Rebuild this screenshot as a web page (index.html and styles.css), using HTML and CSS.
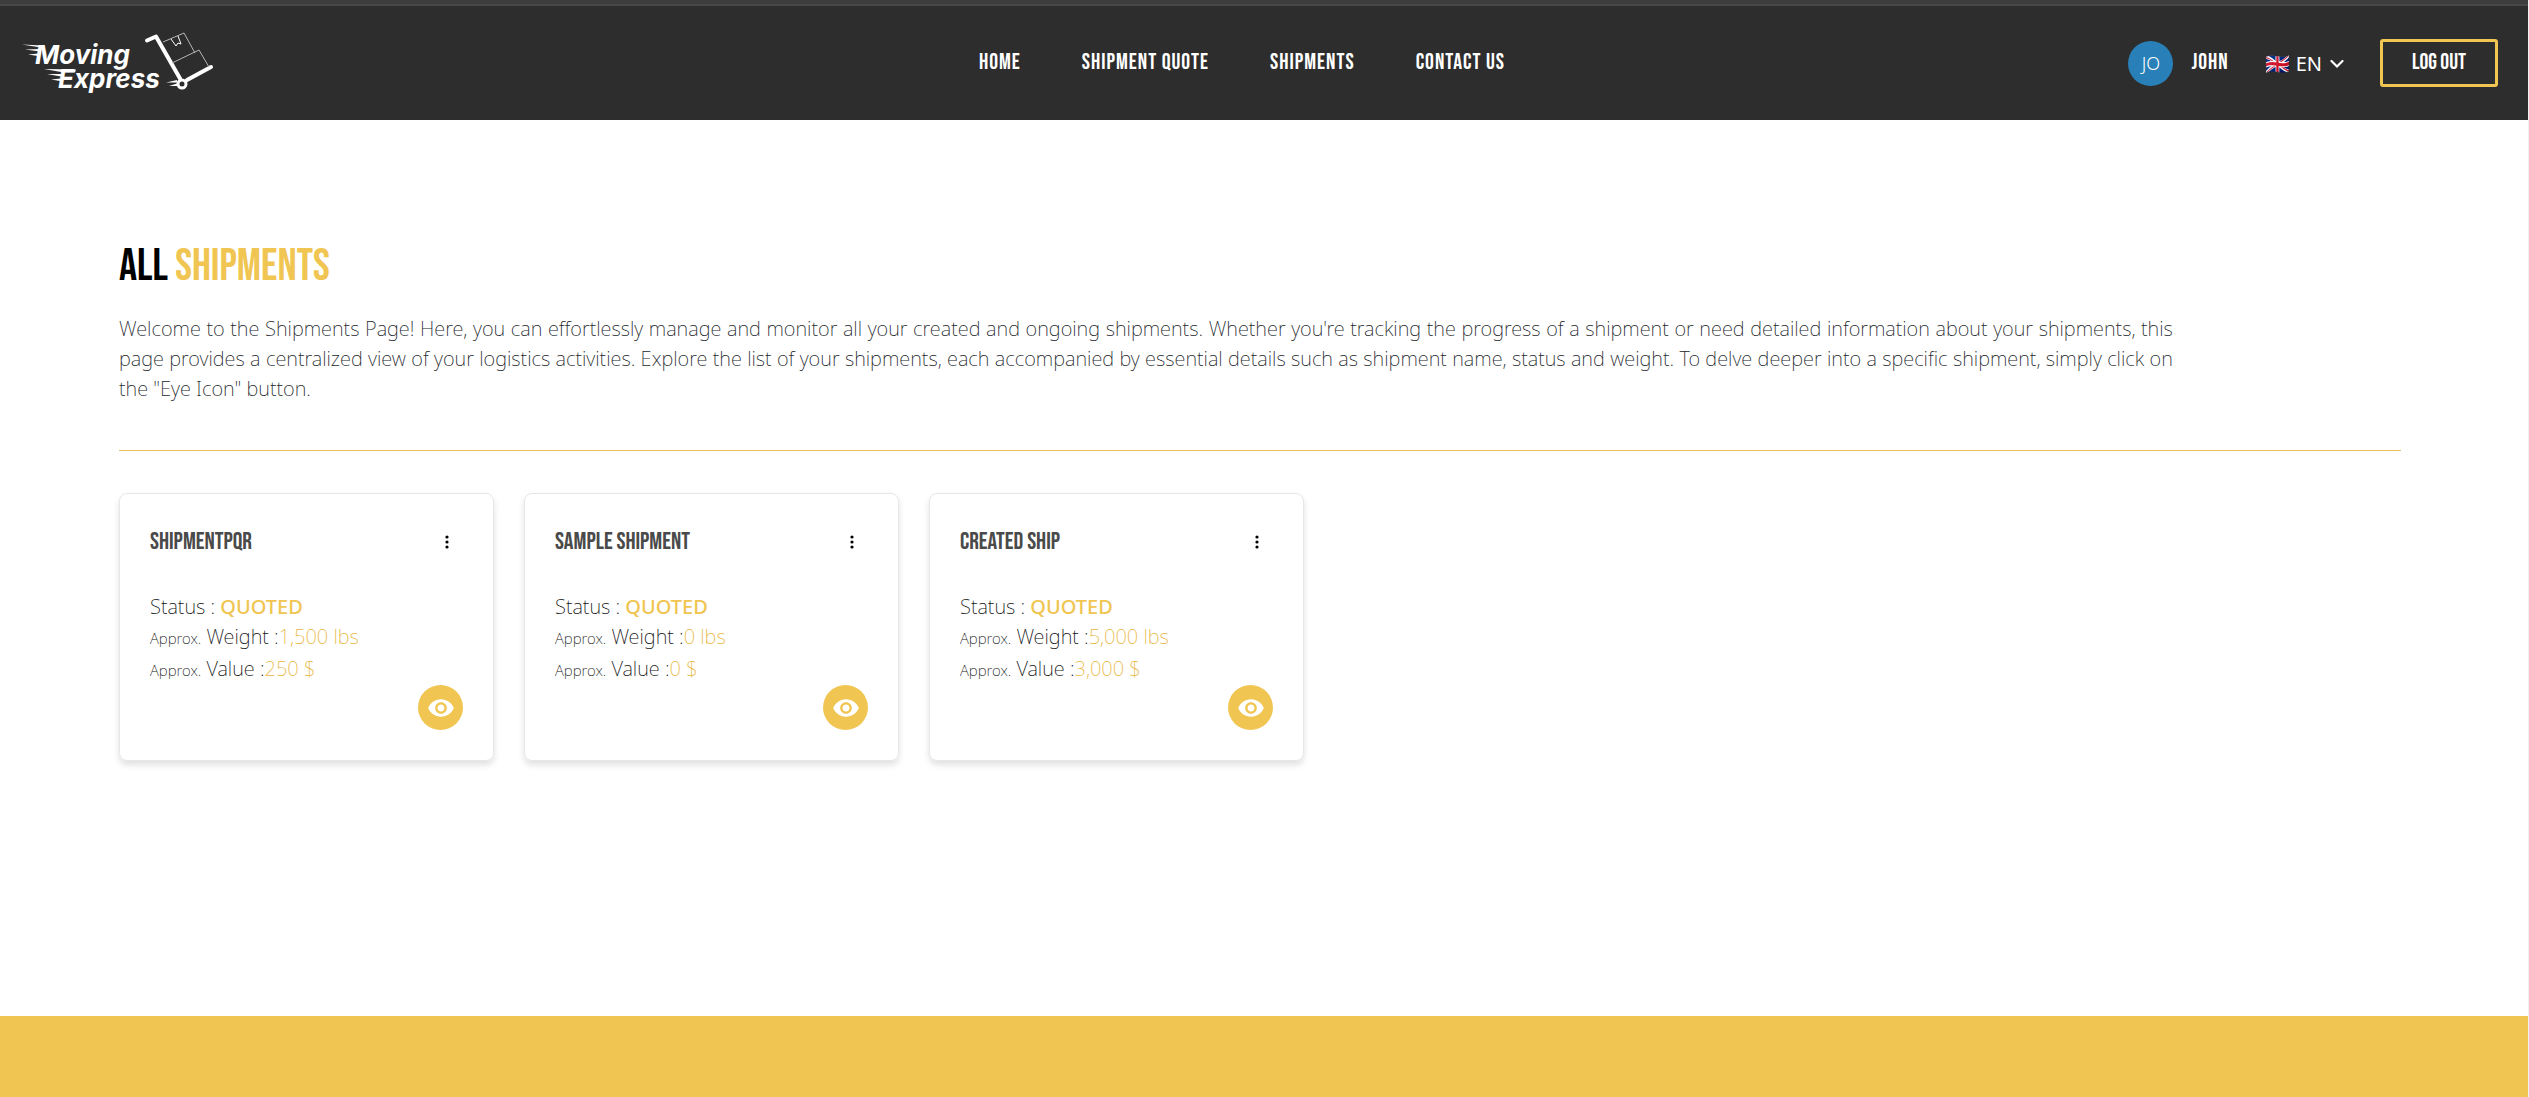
FILE: index.html
```html
<!DOCTYPE html>
<html lang="en">
<head>
<meta charset="utf-8">
<meta name="viewport" content="width=device-width, initial-scale=1">
<title>Moving Express – All Shipments</title>
<link rel="stylesheet" href="styles.css">
</head>
<body>
<svg class="sprite" aria-hidden="true">
  <symbol id="dots" viewBox="0 0 4 14"><circle cx="2" cy="2" r="1.6"/><circle cx="2" cy="7" r="1.6"/><circle cx="2" cy="12" r="1.6"/></symbol>
  <symbol id="eye" viewBox="0 0 24 24"><path d="M12 4.5C7 4.5 2.73 7.61 1 12c1.73 4.39 6 7.5 11 7.5s9.27-3.11 11-7.5c-1.73-4.39-6-7.5-11-7.5zM12 17c-2.76 0-5-2.24-5-5s2.24-5 5-5 5 2.24 5 5-2.24 5-5 5zm0-8c-1.66 0-3 1.34-3 3s1.34 3 3 3 3-1.34 3-3-1.34-3-3-3z"/></symbol>
</svg>
<header class="header">
  <a class="logo" href="#" aria-label="Moving Express">
    <svg width="192" height="66" viewBox="0 -2 192 66">
      <g fill="#fff">
        <path d="M0 12.500 20 13.500 19 15.500zM3 17.500 19 17 18 19.500zM6 22.500 17 21.500 16 24zM22 37 54 37.500 53 40.500 42 40.500zM25 42 40 42 39 44.500zM29 47.500 39 46.500 38 49z"/>
        <text class="logo-text" x="13" y="32">Moving</text>
        <text class="logo-text" x="36" y="56">Express</text>
        <path d="M144 50.500 155 48 155 50.500zM147 54 155 51.500 156 54z"/>
      </g>
      <g fill="none" stroke="#fff">
        <path d="M125 8.500 134 4.500 158 46.500M165 48 189 35" stroke-width="4" stroke-linecap="round" stroke-linejoin="round"/>
        <circle cx="160" cy="52" r="4" stroke-width="3"/>
        <path d="M141 10 162 1 173 21M150 31 177 18 187 35" stroke="#b5b5b5"/>
        <path d="M149 7 154 14 156 11 159 12 156 4"/>
      </g>
    </svg>
  </a>
  <nav class="nav">
    <a href="#">Home</a>
    <a href="#">Shipment Quote</a>
    <a href="#">Shipments</a>
    <a href="#">Contact Us</a>
  </nav>
  <div class="account">
    <span class="avatar">JO</span>
    <a class="user" href="#">John</a>
    <button class="lang" type="button"><span class="flag">🇬🇧</span>EN
      <svg width="14" height="10" viewBox="0 0 14 10"><path d="M1.500 2 7 7.500 12.500 2" fill="none" stroke="#fff" stroke-width="2.200" stroke-linecap="round"/></svg>
    </button>
    <button class="logout" type="button">Log out</button>
  </div>
</header>
<main class="main">
  <h1>All <span>Shipments</span></h1>
  <p class="intro">Welcome to the Shipments Page! Here, you can effortlessly manage and monitor all your created and ongoing shipments. Whether you're tracking the progress of a shipment or need detailed information about your shipments, this page provides a centralized view of your logistics activities. Explore the list of your shipments, each accompanied by essential details such as shipment name, status and weight. To delve deeper into a specific shipment, simply click on the "Eye Icon" button.</p>
  <hr>
  <div class="cards">
    <article class="card">
      <div class="card-head"><h2>Shipmentpqr</h2><button class="more" type="button" aria-label="More"><svg width="4" height="14"><use href="#dots"/></svg></button></div>
      <p>Status : <b>QUOTED</b></p>
      <p><small>Approx.</small> Weight :<span>1,500 lbs</span></p>
      <p class="value"><small>Approx.</small> Value :<span>250 $</span></p>
      <button class="view" type="button" aria-label="View"><svg width="28" height="28"><use href="#eye"/></svg></button>
    </article>
    <article class="card">
      <div class="card-head"><h2>Sample Shipment</h2><button class="more" type="button" aria-label="More"><svg width="4" height="14"><use href="#dots"/></svg></button></div>
      <p>Status : <b>QUOTED</b></p>
      <p><small>Approx.</small> Weight :<span>0 lbs</span></p>
      <p class="value"><small>Approx.</small> Value :<span>0 $</span></p>
      <button class="view" type="button" aria-label="View"><svg width="28" height="28"><use href="#eye"/></svg></button>
    </article>
    <article class="card">
      <div class="card-head"><h2>Created Ship</h2><button class="more" type="button" aria-label="More"><svg width="4" height="14"><use href="#dots"/></svg></button></div>
      <p>Status : <b>QUOTED</b></p>
      <p><small>Approx.</small> Weight :<span>5,000 lbs</span></p>
      <p class="value"><small>Approx.</small> Value :<span>3,000 $</span></p>
      <button class="view" type="button" aria-label="View"><svg width="28" height="28"><use href="#eye"/></svg></button>
    </article>
  </div>
</main>
<footer class="footer"></footer>
</body>
</html>
```
FILE: styles.css
```css
* { box-sizing: border-box; }
body {
  margin: 0;
  min-height: 100vh;
  display: flex;
  flex-direction: column;
  border-right: 1px solid #f0f0f0;
  background: #fff;
  color: #111;
  font: 200 20px/30px "Noto Sans", "Open Sans", sans-serif;
}
h1, h2, p { margin: 0; }
a { color: inherit; text-decoration: none; }
button { padding: 0; border: 0; background: none; color: inherit; font: inherit; cursor: pointer; }
.sprite { display: none; }

.header {
  display: grid;
  grid-template-columns: 1fr auto 1fr;
  align-items: center;
  height: 120px;
  padding: 2px 30px 0 22px;
  border-top: 4px solid #3d3d3d;
  box-shadow: inset 0 2px #484848;
  background: #2d2d2d;
  color: #fff;
}
.logo svg { display: block; }
.logo-text { font: italic 700 26px Inter, sans-serif; }
.nav { display: flex; gap: 61px; margin-right: 36px; }
.nav, .user, .logout { font-family: "Bebas Neue", "Open Sans Condensed", sans-serif; font-weight: 400; }
.nav, .user { font-size: 22px; letter-spacing: 1px; }
.account { display: flex; align-items: center; justify-content: flex-end; }
.avatar {
  width: 45px;
  height: 45px;
  border-radius: 50%;
  background: #2980b9;
  font-size: 18px;
  font-weight: 300;
  line-height: 45px;
  text-align: center;
}
.user { margin: 0 36px 0 18px; }
.lang { display: flex; align-items: center; gap: 8px; margin-right: 36px; padding-top: 2px; font-weight: 400; }
.flag { margin-right: -2px; }
.logout {
  width: 118px;
  height: 48px;
  border: 3px solid #f0c551;
  border-radius: 3px;
  font-size: 22px;
}

.main { flex: 1; padding: 122px 127px 0 119px; }
h1 {
  color: #000;
  font: 400 45px/50px "Bebas Neue", "Open Sans Condensed", sans-serif;
}
h1 span { color: #f0c551; }
.intro { width: 90%; margin-top: 22px; color: #212529; text-align: justify; }
hr { margin: 46px 0 42px; border: 0; border-top: 1px solid #e6c25c; }
.cards { display: flex; flex-wrap: wrap; gap: 30px; }
.card {
  display: flex;
  flex-direction: column;
  width: 375px;
  padding: 30px;
  border: 1px solid #e5e7eb;
  border-radius: 8px;
  box-shadow: 0 4px 6px rgba(0, 0, 0, .12);
}
.card-head { display: flex; justify-content: space-between; align-items: center; height: 36px; margin-bottom: 32px; }
h2 { color: #4a4a4a; font: 400 24px/36px "Bebas Neue", "Open Sans Condensed", sans-serif; }
.more { padding: 0 14px; line-height: 0; }
.card small { font-size: 15px; }
.card span { color: #e8b640; }
.card b { color: #f0c551; font-weight: 500; }
.value { margin-top: 1px; }
.view {
  display: grid;
  place-items: center;
  align-self: flex-end;
  width: 45px;
  height: 45px;
  border-radius: 50%;
  background: #f0c551;
  fill: #fff;
}
.footer { height: 81px; background: #f0c551; }
```
